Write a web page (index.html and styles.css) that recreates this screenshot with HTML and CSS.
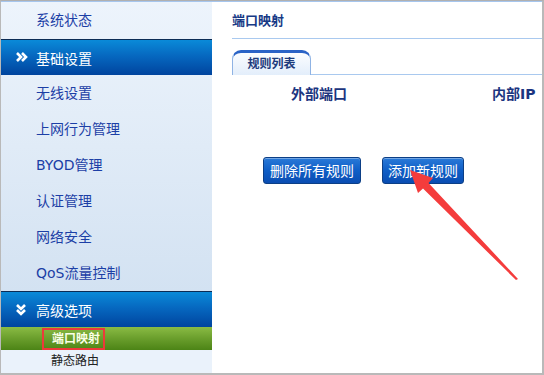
FILE: index.html
```html
<!DOCTYPE html>
<html lang="zh-CN">
<head>
  <meta charset="UTF-8" />
  <title>端口映射</title>
  <link rel="stylesheet" href="styles.css">
</head>
<body>
  <div class="frame">
    <!-- 左侧菜单 -->
    <div class="sidebar">
      <div class="item first">系统状态</div>
      <div class="group">
        <svg class="chev" width="12" height="10" viewBox="0 0 12 10">
          <path d="M1 1 L5 5 L1 9 M6 1 L10 5 L6 9" fill="none" stroke="#fff" stroke-width="2.6"/>
        </svg>
        基础设置
      </div>
      <div class="item">无线设置</div>
      <div class="item">上网行为管理</div>
      <div class="item">BYOD管理</div>
      <div class="item">认证管理</div>
      <div class="item">网络安全</div>
      <div class="item">QoS流量控制</div>
      <div class="group">
        <svg class="chev" width="10" height="12" viewBox="0 0 10 12">
          <path d="M1 1 L5 5 L9 1 M1 6 L5 10 L9 6" fill="none" stroke="#fff" stroke-width="2.6"/>
        </svg>
        高级选项
      </div>
      <div class="sub active"><span class="mark">端口映射</span></div>
      <div class="sub">静态路由</div>
    </div>

    <!-- 右侧内容 -->
    <div class="main">
      <div class="page-title">端口映射</div>
      <div class="tabs">
        <div class="tab">规则列表</div>
      </div>
      <div class="cols">
        <span class="col-ext">外部端口</span>
        <span>内部IP</span>
      </div>
      <div class="actions">
        <button class="btn wide">删除所有规则</button>
        <button class="btn">添加新规则</button>
      </div>
    </div>

    <!-- 红色箭头标注 -->
    <svg class="arrow" width="544" height="375" viewBox="0 0 544 375">
      <polygon points="410,170 433,178 428.5,183 518,279 516,280 423,188.5 418,193" fill="#f43c3c"/>
    </svg>
  </div>
</body>
</html>
```

FILE: styles.css
```css
* { margin: 0; padding: 0; box-sizing: border-box; }

body {
  font-family: "DejaVu Sans", "Noto Sans CJK SC", sans-serif;
  background: #fff;
}

.frame {
  position: relative;
  width: 544px;
  height: 375px;
  border: 1px solid #b9b9b9;
  border-right-width: 2px;
  border-bottom-width: 2px;
  border-top-color: #b0b0b0;
  display: flex;
  overflow: hidden;
  box-shadow: inset 0 1px 0 #a6c6ee;
}

/* 左侧菜单 */
.sidebar {
  width: 211px;
  flex-shrink: 0;
  margin-top: 1px;
  display: flex;
  flex-direction: column;
  background: linear-gradient(#edf4fc, #d3e2f2 78%, #d3e2f2);
}

.item {
  height: 36px;
  line-height: 36px;
  padding-left: 35px;
  font-size: 14px;
  color: #1c3fa6;
}
.item.first { height: 37px; line-height: 37px; }

.group {
  height: 36px;
  display: flex;
  align-items: center;
  padding-left: 35px;
  position: relative;
  font-size: 14px;
  color: #fff;
  border-top: 1px solid #0b2c55;
  background: linear-gradient(#0a8ad8, #0668c0 45%, #00449e);
}
.group .chev {
  position: absolute;
  left: 15px;
  top: 12px;
}

.sub {
  height: 23px;
  line-height: 23px;
  padding-left: 50px;
  font-size: 12px;
  color: #222;
  background: #eaf2fb;
}
.sub.active {
  background: linear-gradient(#8abb44, #6a9e2c 50%, #4c8416);
  padding-left: 41px;
  display: flex;
  align-items: center;
}
.mark {
  display: inline-block;
  height: 22px;
  line-height: 18px;
  padding: 0 3px 0 8px;
  border: 2px solid #ec3a3a;
  font-weight: bold;
  color: #fbffe6;
}

/* 右侧内容 */
.main {
  flex: 1;
  margin-top: 1px;
  padding-left: 20px;
  display: flex;
  flex-direction: column;
}

.page-title {
  height: 37px;
  line-height: 37px;
  font-size: 13px;
  font-weight: bold;
  color: #173a86;
  border-bottom: 1px solid #a9c9ef;
}

.tabs {
  margin-top: 10px;
  height: 26px;
  border-bottom: 1px solid #a9c9ef;
  display: flex;
  align-items: flex-end;
}
.tab {
  width: 79px;
  height: 25px;
  margin-bottom: -1px;
  border: 1px solid #8fb3e4;
  border-top: 3px solid #2a63c6;
  border-bottom: none;
  border-radius: 9px 9px 0 0;
  background: linear-gradient(#fbfdff, #e3eefb);
  text-align: center;
  line-height: 22px;
  font-size: 12px;
  font-weight: bold;
  color: #1d3b7c;
}

.cols {
  display: flex;
  padding-left: 59px;
  margin-top: 10px;
  height: 18px;
  line-height: 18px;
  font-size: 14px;
  font-weight: bold;
  color: #1b3580;
  white-space: nowrap;
}
.col-ext { width: 201px; }

.actions {
  display: flex;
  gap: 21px;
  padding-left: 31px;
  margin-top: 54px;
}
.btn {
  width: 82px;
  height: 27px;
  border: 1px solid #0c3f86;
  border-radius: 3px;
  background: linear-gradient(#2a7ad8, #0f5ec6 50%, #0a4db2);
  box-shadow: inset 0 1px 0 rgba(255,255,255,0.35);
  color: #fff;
  font-family: "Noto Sans CJK SC", sans-serif;
  font-size: 14px;
  line-height: 25px;
  cursor: pointer;
}
.btn.wide { width: 98px; }

.arrow {
  position: absolute;
  left: -1px;
  top: -1px;
  pointer-events: none;
}
```
